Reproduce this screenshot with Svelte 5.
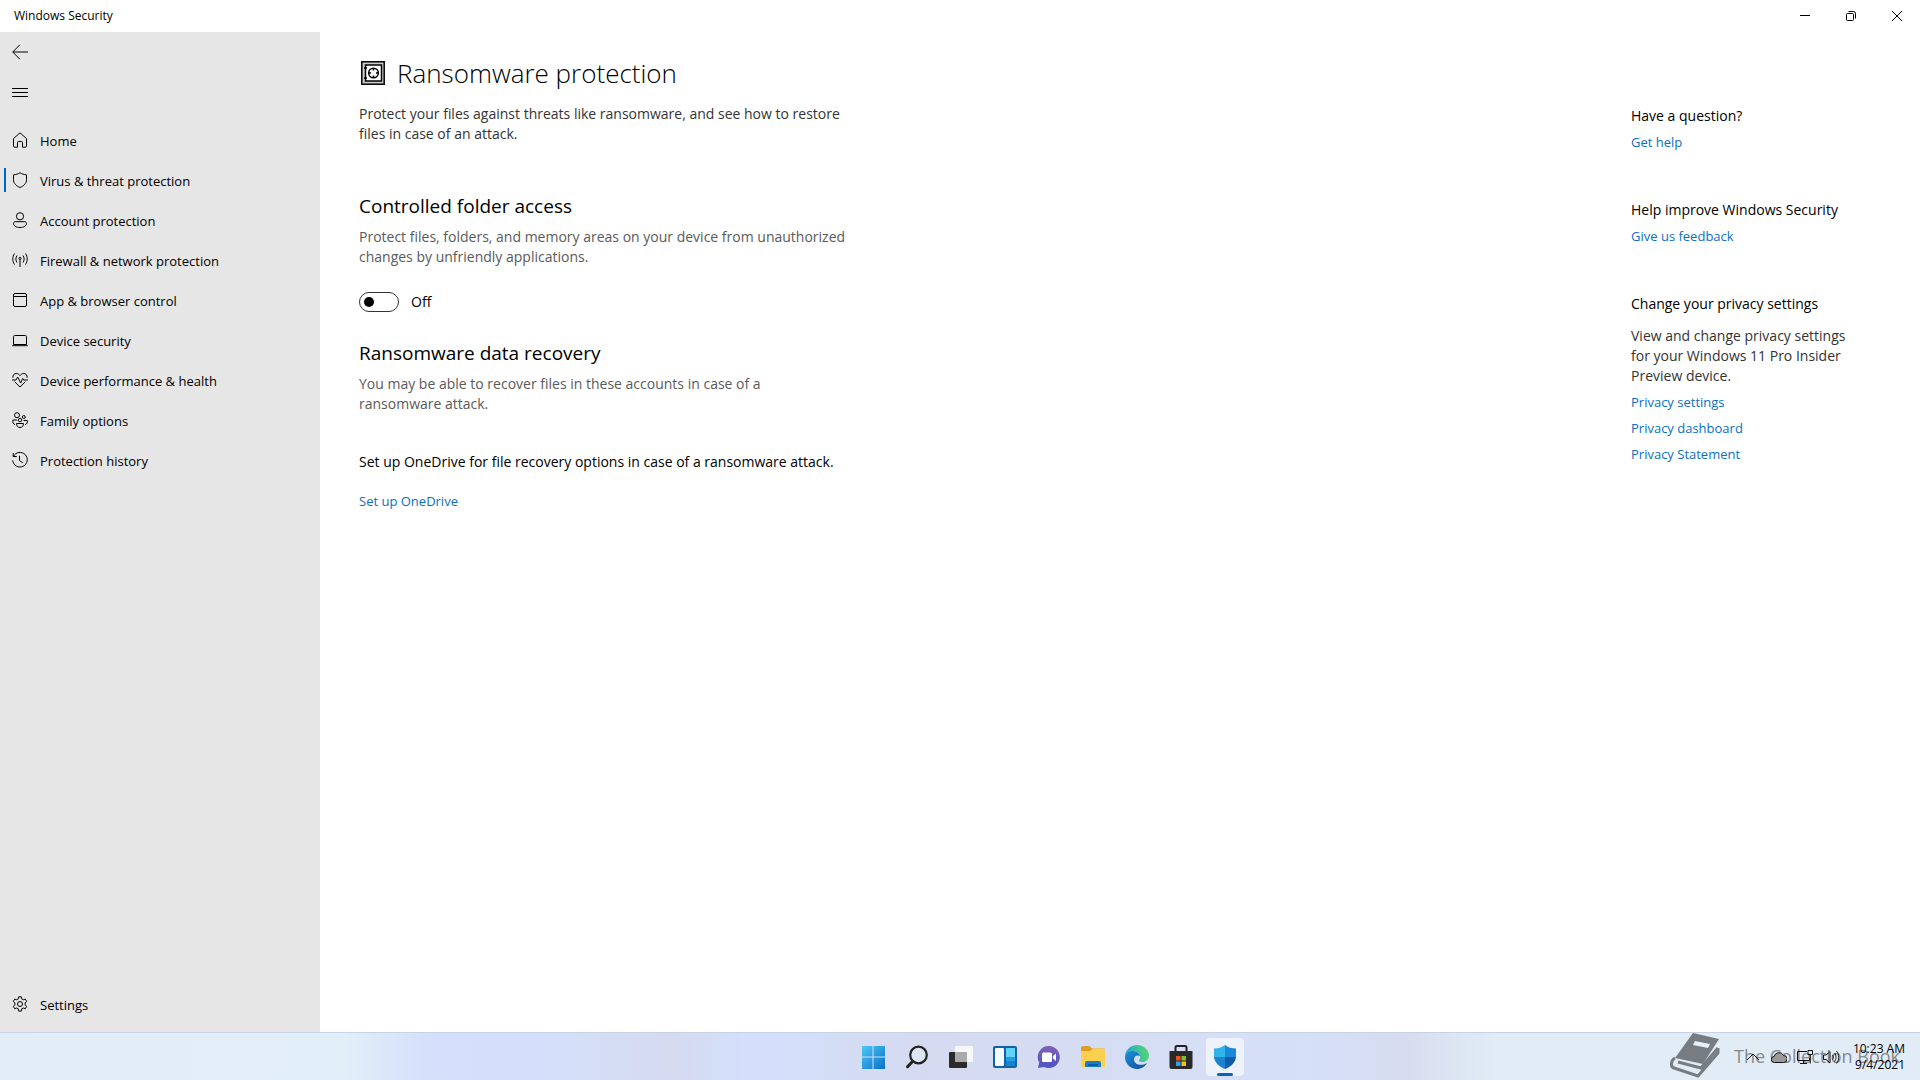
<script lang="ts">
	let controlled = false;

	const navItems = [
		{ id: 'home', label: 'Home' },
		{ id: 'virus', label: 'Virus & threat protection' },
		{ id: 'account', label: 'Account protection' },
		{ id: 'firewall', label: 'Firewall & network protection' },
		{ id: 'browser', label: 'App & browser control' },
		{ id: 'device', label: 'Device security' },
		{ id: 'health', label: 'Device performance & health' },
		{ id: 'family', label: 'Family options' },
		{ id: 'history', label: 'Protection history' }
	];
	let active = 'virus';

	const icons = {
		home: 'M1.5 6.6 8 .8l6.500 5.800V14a1.200 1.200 0 0 1-1.200 1.200H10.500V10.500a1 1 0 0 0-1-1h-3a1 1 0 0 0-1 1v4.700H2.700A1.200 1.200 0 0 1 1.500 14z',
		virus: 'M8 .7C10 2 12 2.700 14.500 2.800v5c0 3.500-2.500 6-6.500 7.700-4-1.700-6.500-4.200-6.500-7.700v-5C4 2.700 6 2 8 .7z',
		account: 'M8 .7a3.600 3.600 0 1 1 0 7.200A3.600 3.600 0 0 1 8 .7zM3.200 9.700h9.600c1 0 1.700.8 1.700 1.700 0 2.400-2.700 4.100-6.500 4.100s-6.500-1.700-6.500-4.100c0-1 .7-1.700 1.700-1.700z',
		firewall: 'M2.500 1.500c-2.300 3.300-2.300 7.700 0 11M5 3.500c-1.500 2.100-1.500 4.900 0 7M13.500 1.500c2.300 3.300 2.300 7.700 0 11M11 3.500c1.500 2.100 1.500 4.900 0 7M8 7.500V15M8 5.300a1.100 1.100 0 1 1 0 2.200 1.100 1.100 0 0 1 0-2.200z',
		browser: 'M3 1.500h10a1.500 1.500 0 0 1 1.500 1.500v10a1.500 1.500 0 0 1-1.500 1.500H3A1.500 1.500 0 0 1 1.500 13V3A1.500 1.500 0 0 1 3 1.500zM1.500 4.500h13',
		device: 'M2.700 3.500h10.600a1.200 1.200 0 0 1 1.200 1.200v7.800h-13V4.700a1.200 1.200 0 0 1 1.200-1.200zM.3 13.700h15.400',
		health: 'M.9 5.800C.6 3.300 2 1.500 4.200 1.500 6 1.500 7 2.300 8 3.600c1-1.300 2-2.100 3.800-2.100 2.200 0 3.600 1.800 3.300 4.300M2.700 9.800 8 15l5.300-5.200M0 8h4l1.700-3 3 6 2-4.500.9 1.500H16',
		family: 'M5 .7a2.500 2.500 0 1 1 0 5 2.500 2.500 0 0 1 0-5zM11.800 3.500a1.500 1.500 0 1 1 0 3 1.500 1.500 0 0 1 0-3zM8 6.400a1.700 1.700 0 1 1 0 3.400 1.700 1.700 0 0 1 0-3.400zM4.500 11.500h7c0 2.500-1.300 4-3.500 4s-3.500-1.500-3.500-4zM5 8H1C.3 10.300 1.200 12 3 12.700M11.500 8.500h3.800c.5 2-.5 3.500-2.100 4.200',
		history: 'M1.200 1v3.500h3.600M1.500 4.300A7.300 7.300 0 1 1 .7 8.500M7.500 3.800V8.500l3.300 2.300'
	};
	const gear =
		'M6.700.8h2.600l.4 2.100 1.600.9 2-.7 1.400 2.300-1.600 1.500v2l1.600 1.500-1.400 2.300-2-.7-1.600.9-.4 2.200H6.700l-.4-2.200-1.600-.9-2 .7-1.400-2.300 1.600-1.500v-2L1.300 5.400l1.400-2.300 2 .7 1.600-.9zM8 5.500a2.500 2.500 0 1 1 0 5 2.500 2.500 0 0 1 0-5z';
</script>

<div class="screen">
	<header class="titlebar">
		<span class="app-name">Windows Security</span>
		<div class="window-buttons">
			<button aria-label="Minimize">
				<svg viewBox="0 0 12 12"><path d="M1 5.500h10" /></svg>
			</button>
			<button aria-label="Restore">
				<svg viewBox="0 0 12 12"><path d="M2.500 3.500h5a1 1 0 0 1 1 1v5a1 1 0 0 1-1 1h-5a1 1 0 0 1-1-1v-5a1 1 0 0 1 1-1zM3.500 1.500H8.500a2 2 0 0 1 2 2V8.500" /></svg>
			</button>
			<button aria-label="Close">
				<svg viewBox="0 0 12 12"><path d="m1 1 10 10M11 1 1 11" /></svg>
			</button>
		</div>
	</header>

	<div class="window">
		<nav class="sidebar">
			<button class="nav-item" aria-label="Back">
				<svg class="icon" viewBox="0 0 16 16"><path d="M16 8H.8M7.800.8.800 8l7 7.200" /></svg>
			</button>
			<button class="nav-item" aria-label="Menu">
				<svg class="icon" viewBox="0 0 16 16"><path d="M0 4.500h16M0 8.500h16M0 12.500h16" /></svg>
			</button>
			<ul class="nav-list">
				{#each navItems as item}
					<li>
						<button class="nav-item" class:active={active === item.id} on:click={() => (active = item.id)}>
							<svg class="icon" viewBox="0 0 16 16"><path d={icons[item.id]} /></svg>
							<span>{item.label}</span>
						</button>
					</li>
				{/each}
			</ul>
			<button class="nav-item settings">
				<svg class="icon" viewBox="0 0 16 16"><path d={gear} /></svg>
				<span>Settings</span>
			</button>
		</nav>

		<main class="content">
			<div class="page-title">
				<svg class="safe" viewBox="0 0 24 24">
					<rect x=".8" y=".8" width="22.400" height="22.400" fill="#ccc" />
					<rect x="4.500" y="4" width="16" height="16" fill="#fff" />
					<circle cx="12.500" cy="12" r="4.800" />
					<path d="M12.500 7v2.500M12.500 14.500V17M7.500 12H10M15 12h2.500M3 7h3M3 17h3" />
				</svg>
				<h1>Ransomware protection</h1>
			</div>
			<p class="intro">Protect your files against threats like ransomware, and see how to restore<br />files in case of an attack.</p>

			<section class="controlled">
				<h2>Controlled folder access</h2>
				<p class="muted">Protect files, folders, and memory areas on your device from unauthorized<br />changes by unfriendly applications.</p>
				<label class="toggle">
					<input type="checkbox" role="switch" bind:checked={controlled} />
					<span>{controlled ? 'On' : 'Off'}</span>
				</label>
			</section>

			<section class="recovery">
				<h2>Ransomware data recovery</h2>
				<p class="muted">You may be able to recover files in these accounts in case of a<br />ransomware attack.</p>
				<p class="onedrive">Set up OneDrive for file recovery options in case of a ransomware attack.</p>
				<a href="#onedrive">Set up OneDrive</a>
			</section>
		</main>

		<aside class="help">
			<section>
				<h3>Have a question?</h3>
				<a href="#help">Get help</a>
			</section>
			<section>
				<h3>Help improve Windows Security</h3>
				<a href="#feedback">Give us feedback</a>
			</section>
			<section>
				<h3>Change your privacy settings</h3>
				<p>View and change privacy settings<br />for your Windows 11 Pro Insider<br />Preview device.</p>
				<a href="#settings">Privacy settings</a>
				<a href="#dashboard">Privacy dashboard</a>
				<a href="#statement">Privacy Statement</a>
			</section>
		</aside>
	</div>

	<footer class="taskbar">
		<div class="apps">
			<button aria-label="Start">
				<svg viewBox="0 0 24 24">
					<defs>
						<linearGradient id="start" x1="0" y1="0" x2="1" y2="1">
							<stop offset="0" stop-color="#4cc8f4" /><stop offset="1" stop-color="#0a70cc" />
						</linearGradient>
					</defs>
					<path fill="url(#start)" d="M1 1h10.500v10.500H1zM12.500 1H24v10.500H12.500zM1 12.500h10.500V24H1zM12.500 12.500H24V24H12.500z" />
				</svg>
			</button>
			<button aria-label="Search">
				<svg viewBox="0 0 24 24">
					<circle cx="13.500" cy="10" r="8.300" fill="#dde4f3" stroke="#222" stroke-width="2.200" />
					<path d="m7.500 16.500-5 5.200" stroke="#222" stroke-width="3" stroke-linecap="round" />
				</svg>
			</button>
			<button aria-label="Task view">
				<svg viewBox="0 0 24 24">
					<rect x="0" y="7" width="18" height="16" rx="1" fill="#2b2b2b" />
					<rect x="6" y="1" width="18" height="16" rx="1" fill="#f7f7f7" />
					<path d="M6 7h12v10H6z" fill="#aaa" />
				</svg>
			</button>
			<button aria-label="Widgets">
				<svg viewBox="0 0 24 24">
					<rect y="1" width="24" height="22" rx="2" fill="#1361a6" />
					<rect x="2" y="3" width="9" height="18" rx="1" fill="#f5fafd" />
					<path d="M13 3h9v9h-9z" fill="#61d3fb" />
					<path d="M13 12h9v4h-9z" fill="#249ee3" />
					<path d="M13 16h9v5h-9z" fill="#1683d0" />
				</svg>
			</button>
			<button aria-label="Chat">
				<svg viewBox="0 0 24 24">
					<defs>
						<linearGradient id="chat" x1="0" y1="0" x2="0" y2="1">
							<stop offset="0" stop-color="#8060b8" /><stop offset="1" stop-color="#4d55c4" />
						</linearGradient>
					</defs>
					<path d="M12 1a11 11 0 1 1-5 20.900L1 23l1.200-5.600A11 11 0 0 1 12 1z" fill="url(#chat)" />
					<rect x="5" y="7.500" width="10" height="9.500" rx="1.500" fill="#fff" />
					<path d="m16 11 3-2.500v7.500l-3-2.500z" fill="#fff" />
				</svg>
			</button>
			<button aria-label="File Explorer">
				<svg viewBox="0 0 24 24">
					<path d="M0 3a2 2 0 0 1 2-2h6.500l2.500 2.500h11a2 2 0 0 1 2 2V9H0z" fill="#dd9f21" />
					<path d="M0 6h9l3-2.500h10a2 2 0 0 1 2 2V22H0z" fill="#fbd04f" />
					<path d="M4 22v-4a2 2 0 0 1 2-2h12a2 2 0 0 1 2 2v4z" fill="#187ec9" />
					<path d="M7 19h10v2H7z" fill="#0b5ca6" />
				</svg>
			</button>
			<button aria-label="Edge">
				<svg viewBox="0 0 24 24">
					<defs>
						<linearGradient id="edgeTop" x1="0" y1=".5" x2="1" y2=".3">
							<stop offset="0" stop-color="#1aa7d8" /><stop offset="1" stop-color="#5ed66b" />
						</linearGradient>
						<linearGradient id="edgeLow" x1="0" y1="0" x2="1" y2="1">
							<stop offset="0" stop-color="#1d90dd" /><stop offset="1" stop-color="#104b98" />
						</linearGradient>
					</defs>
					<path d="M0 12C0 5 5.500 0 12 0s12 5 12 10.500c0 4-3 6.500-6.500 6.500-2.500 0-4-1-3.500-2 1-1 1.500-2 1-3.800C14 8 11 6.200 7.500 6.200 3.500 6.200.5 8.500 0 12z" fill="url(#edgeTop)" />
					<path d="M0 12c.5-4 3.500-6 7.500-6 3.700 0 6.700 2.200 7.500 5.200-2-1.500-6-.7-6 3.300 0 4.500 6.500 7.500 13 3.500C20 21.800 16 24 12 24 5.300 24 0 18.700 0 12z" fill="url(#edgeLow)" />
				</svg>
			</button>
			<button aria-label="Microsoft Store">
				<svg viewBox="0 0 24 24">
					<path d="M6.500 7V2.500A1.500 1.500 0 0 1 8 1h8a1.500 1.500 0 0 1 1.500 1.500V7" fill="none" stroke="#222" stroke-width="2" />
					<path d="M.5 6h23v16a2 2 0 0 1-2 2h-19a2 2 0 0 1-2-2z" fill="#292929" />
					<path d="M7 11h4.500v4.500H7z" fill="#f05123" /><path d="M12.500 11H17v4.500h-4.500z" fill="#83bd27" />
					<path d="M7 16.500h4.500V21H7z" fill="#22a8ec" /><path d="M12.500 16.500H17V21h-4.500z" fill="#fdbd18" />
				</svg>
			</button>
			<button class="running" aria-label="Windows Security">
				<svg viewBox="0 0 24 24">
					<path d="M12 0v12H1V3.500C5.500 3.500 9 2.500 12 0z" fill="#31b4ea" />
					<path d="M12 0c3 2.500 6.500 3.500 11 3.500V12H12z" fill="#1988d8" />
					<path d="M1 12h11v12C5.500 21.500 1.500 17 1 12z" fill="#1a82cf" />
					<path d="M12 12h11c-.5 5-4.500 9.500-11 12z" fill="#105baa" />
				</svg>
			</button>
		</div>

		<div class="tray">
			<button aria-label="Show hidden icons"><svg viewBox="0 0 16 16"><path d="m2 11 6-6 6 6" /></svg></button>
			<button aria-label="OneDrive"><svg viewBox="0 0 16 16"><path d="M3.500 13.500a3 3 0 0 1-.4-6A5 5 0 0 1 12.500 6.500a3.500 3.500 0 0 1 .3 7z" fill="#999" /></svg></button>
			<button aria-label="Network"><svg viewBox="0 0 16 16"><path d="M10 2.500H.5v9h12V9M6.500 11.500v3M3 14.500h7M11 1.500h4.500v4H11zM13.300 5.500v9" /></svg></button>
			<button aria-label="Volume"><svg viewBox="0 0 16 16"><path d="M.5 6v4.500h2.500L7 14V2.500L3 6zM9.500 6c1 1.500 1 3 0 4.500M11.500 4c2 2.500 2 6 0 8.500M13.500 2c3 3.500 3 9 0 12.500" /></svg></button>
			<div class="clock"><span>10:23 AM</span><span>9/4/2021</span></div>
		</div>

		<!-- site mark, sits behind the tray icons -->
		<div class="watermark">
			<svg viewBox="0 0 50 46">
				<path d="M23 0 49 6 33 31 5 25z" fill="#777c82" />
				<path d="m25 8 15 3-2 4-15-3z" fill="#e6eff8" />
				<path d="M5 25c-4 2-5 9-1 10l24 8L48 20v-5M8 29l23 6 17-20" fill="none" stroke="#777c82" stroke-width="3" />
			</svg>
			<span>The Collection Book</span>
		</div>
	</footer>
</div>

<style>
	:global(body) {
		margin: 0;
		background: #fff;
	}

	.screen {
		min-height: 100vh;
		display: flex;
		flex-direction: column;
		font-family: 'Open Sans', 'Noto Sans', sans-serif;
		font-size: 14px;
		line-height: 20px;
		color: #000;
	}

	button {
		border: 0;
		padding: 0;
		background: none;
		font: inherit;
		color: inherit;
	}

	h1, h2, h3, p, ul {
		margin: 0;
		padding: 0;
		font-weight: 400;
	}

	a {
		color: #0a6fc2;
		font-size: 13px;
		text-decoration: none;
	}

	/* title bar */
	.titlebar {
		height: 32px;
		display: flex;
		align-items: center;
		justify-content: space-between;
		padding-left: 14px;
	}

	.app-name {
		font-size: 12px;
	}

	.window-buttons {
		display: flex;
	}

	.window-buttons button {
		width: 46px;
		height: 32px;
		display: grid;
		place-items: center;
	}

	.window-buttons svg {
		width: 12px;
		height: 12px;
		fill: none;
		stroke: #000;
	}

	/* sidebar */
	.window {
		flex: 1;
		display: flex;
	}

	.sidebar {
		width: 320px;
		flex-shrink: 0;
		display: flex;
		flex-direction: column;
		background: #e6e6e6;
		padding-bottom: 8px;
	}

	.nav-list {
		list-style: none;
		padding-top: 8px;
	}

	.nav-item {
		width: 100%;
		height: 40px;
		display: flex;
		align-items: center;
		gap: 12px;
		padding: 0 8px;
		border-left: 4px solid transparent;
		position: relative;
		text-align: left;
		font-size: 13px;
	}

	.nav-item span {
		padding-top: 2px;
	}

	.nav-item.active::before {
		content: '';
		position: absolute;
		left: 0;
		top: 8px;
		width: 2px;
		height: 24px;
		background: #0067c0;
	}

	.settings {
		margin-top: auto;
	}

	.icon {
		width: 16px;
		height: 16px;
		fill: none;
		stroke: #000;
		overflow: visible;
	}

	/* page */
	.content {
		flex: 1;
		padding: 21px 39px;
	}

	.page-title {
		display: flex;
		align-items: center;
		gap: 12px;
	}

	.page-title h1 {
		font-size: 26px;
		font-weight: 300;
		line-height: 40px;
	}

	.safe {
		width: 24px;
		height: 24px;
		margin-left: 2px;
		fill: none;
		stroke: #000;
		stroke-width: 1.5px;
	}

	.intro {
		margin-top: 11px;
		color: #333;
	}

	h2 {
		font-size: 19px;
		line-height: 28px;
	}

	.controlled {
		margin-top: 48px;
	}

	.muted {
		margin-top: 7px;
		color: #5a5a5a;
	}

	.toggle {
		display: flex;
		align-items: center;
		gap: 12px;
		margin-top: 25px;
	}

	.toggle input {
		appearance: none;
		width: 40px;
		height: 20px;
		margin: 0;
		border: 1px solid #333;
		border-radius: 10px;
		display: flex;
		align-items: center;
		padding: 0 4px;
	}

	.toggle input::before {
		content: '';
		width: 10px;
		height: 10px;
		border-radius: 50%;
		background: #000;
	}

	.toggle input:checked {
		justify-content: flex-end;
	}

	.recovery {
		margin-top: 27px;
	}

	.onedrive {
		margin: 38px 0 19px;
	}

	/* help column */
	.help {
		width: 250px;
		padding: 74px 39px 0 0;
	}

	.help section {
		display: flex;
		flex-direction: column;
		align-items: flex-start;
		gap: 6px;
		margin-bottom: 48px;
	}

	h3 {
		font-size: 14px;
	}

	.help p {
		color: #333;
		margin-top: 6px;
	}

	/* taskbar */
	.taskbar {
		height: 47px;
		border-top: 1px solid #c5d3e4;
		display: grid;
		grid-template-columns: 1fr auto 1fr;
		align-items: center;
		position: relative;
		padding-left: 178px;
		background: linear-gradient(90deg, #e2edf7 0%, #e2eef8 18%, #d5e1fb 22%, #d4e0fb 28%, #d5daef 35%, #d3e0fc 39%, #d5daf0 48%, #d6def4 60%, #d5e0f9 68%, #d7dcef 73%, #e1ecf6 78%, #e1ecf7 100%);
	}

	.apps {
		grid-column: 2;
		display: flex;
		gap: 6px;
	}

	.apps button {
		width: 38px;
		height: 38px;
		display: grid;
		place-items: center;
		border-radius: 4px;
		position: relative;
	}

	.apps svg {
		width: 24px;
		height: 24px;
	}

	.apps .running {
		background: #edf2fb;
	}

	.running::after {
		content: '';
		position: absolute;
		left: 11px;
		bottom: 0;
		width: 16px;
		height: 3px;
		border-radius: 2px;
		background: #0067c0;
	}

	.tray {
		display: flex;
		align-items: center;
		justify-content: flex-end;
		gap: 10px;
		padding-right: 15px;
		position: relative;
		z-index: 1;
	}

	.tray button {
		display: grid;
	}

	.tray svg {
		width: 16px;
		height: 16px;
		fill: none;
		stroke: #111;
	}

	.clock {
		display: flex;
		flex-direction: column;
		align-items: flex-end;
		margin-left: 4px;
		font-size: 12px;
		line-height: 16px;
	}

	.watermark {
		position: absolute;
		right: 20px;
		top: 0;
		display: flex;
		align-items: center;
		gap: 14px;
		font-size: 18px;
		color: #85898e;
		pointer-events: none;
	}

	.watermark svg {
		width: 50px;
		height: 46px;
	}
</style>
